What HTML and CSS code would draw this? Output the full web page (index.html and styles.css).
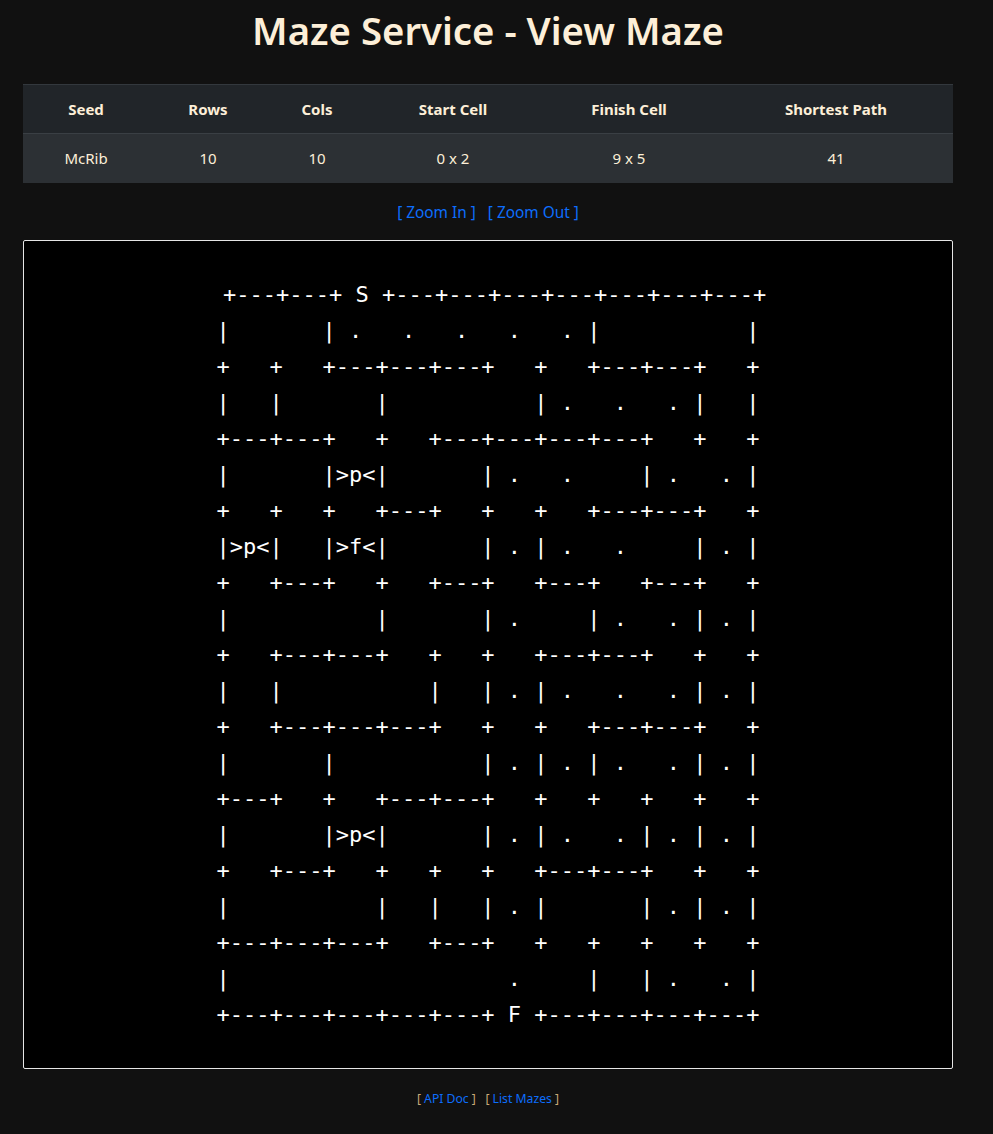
FILE: index.html
```html
<!DOCTYPE html>
<html lang="en">
<head>
<meta charset="utf-8">
<title>Maze Service - View Maze</title>
<link rel="stylesheet" href="styles.css">
</head>
<body>
<div class="page">
  <h1 class="title">Maze Service - View Maze</h1>
  <table class="info">
    <thead>
      <tr>
        <th class="c1">Seed</th>
        <th class="c2">Rows</th>
        <th class="c3">Cols</th>
        <th class="c4">Start Cell</th>
        <th class="c5">Finish Cell</th>
        <th class="c6">Shortest Path</th>
      </tr>
    </thead>
    <tbody>
      <tr>
        <td>McRib</td>
        <td>10</td>
        <td>10</td>
        <td>0 x 2</td>
        <td>9 x 5</td>
        <td>41</td>
      </tr>
    </tbody>
  </table>
  <div class="zoom"><a href="#">[ Zoom In ]</a>&nbsp;&nbsp;&nbsp;<a href="#">[ Zoom Out ]</a></div>
  <div class="maze-box">
<pre class="maze"> +---+---+ S +---+---+---+---+---+---+---+
|       | .   .   .   .   . |           |
+   +   +---+---+---+   +   +---+---+   +
|   |       |           | .   .   . |   |
+---+---+   +   +---+---+---+---+   +   +
|       |&gt;p&lt;|       | .   .     | .   . |
+   +   +   +---+   +   +   +---+---+   +
|&gt;p&lt;|   |&gt;f&lt;|       | . | .   .     | . |
+   +---+   +   +---+   +---+   +---+   +
|           |       | .     | .   . | . |
+   +---+---+   +   +   +---+---+   +   +
|   |           |   | . | .   .   . | . |
+   +---+---+---+   +   +   +---+---+   +
|       |           | . | . | .   . | . |
+---+   +   +---+---+   +   +   +   +   +
|       |&gt;p&lt;|       | . | .   . | . | . |
+   +---+   +   +   +   +---+---+   +   +
|           |   |   | . |       | . | . |
+---+---+---+   +---+   +   +   +   +   +
|                     .     |   | .   . |
+---+---+---+---+---+ F +---+---+---+---+</pre>
  </div>
  <div class="footer"><span class="br">[ </span><a href="#">API Doc</a><span class="br"> ]</span>&nbsp;&nbsp;&nbsp;<span class="br">[ </span><a href="#">List Mazes</a><span class="br"> ]</span></div>
</div>
</body>
</html>
```
FILE: styles.css
```css
html, body {
  margin: 0;
  padding: 0;
  background: #111111;
}
body {
  font-family: "Noto Sans", "Open Sans", sans-serif;
  color: #fdefd8;
}
.page {
  width: 930px;
  margin-left: 23px;
  display: flex;
  flex-direction: column;
}
.title {
  margin: 6px 0 30px;
  font-size: 38.3px;
  line-height: 48px;
  font-weight: 600;
  text-align: center;
  color: #fdefd8;
}
.info {
  width: 930px;
  border-collapse: collapse;
  table-layout: fixed;
  font-size: 15px;
}
.info th, .info td {
  text-align: center;
  padding: 0;
}
.info thead tr {
  background: #212529;
  height: 49px;
  border-top: 1px solid #33383d;
  border-bottom: 1px solid #3a3f44;
}
.info tbody tr {
  background: #2c3034;
  height: 49px;
}
.info th { font-weight: 700; }
.info td { font-weight: 400; }
.c1 { width: 126px; }
.c2 { width: 118px; }
.c3 { width: 100px; }
.c4 { width: 172px; }
.c5 { width: 180px; }
.c6 { width: 234px; }
.zoom {
  margin: 18px 0 15px;
  text-align: center;
  font-size: 15.4px;
  line-height: 24px;
}
a {
  color: #0d6efd;
  text-decoration: none;
}
.maze-box {
  background: #000;
  border: 1px solid #e6e6e6;
  border-radius: 2px;
  padding: 36px 0 35px;
}
.maze {
  margin: 0;
  font-family: "DejaVu Sans Mono", monospace;
  font-size: 22px;
  line-height: 36px;
  color: #ffffff;
  text-align: center;
}
.footer {
  margin-top: 20px;
  text-align: center;
  font-size: 12.2px;
  line-height: 20px;
}
.br {
  color: #c8aa78;
}
```
